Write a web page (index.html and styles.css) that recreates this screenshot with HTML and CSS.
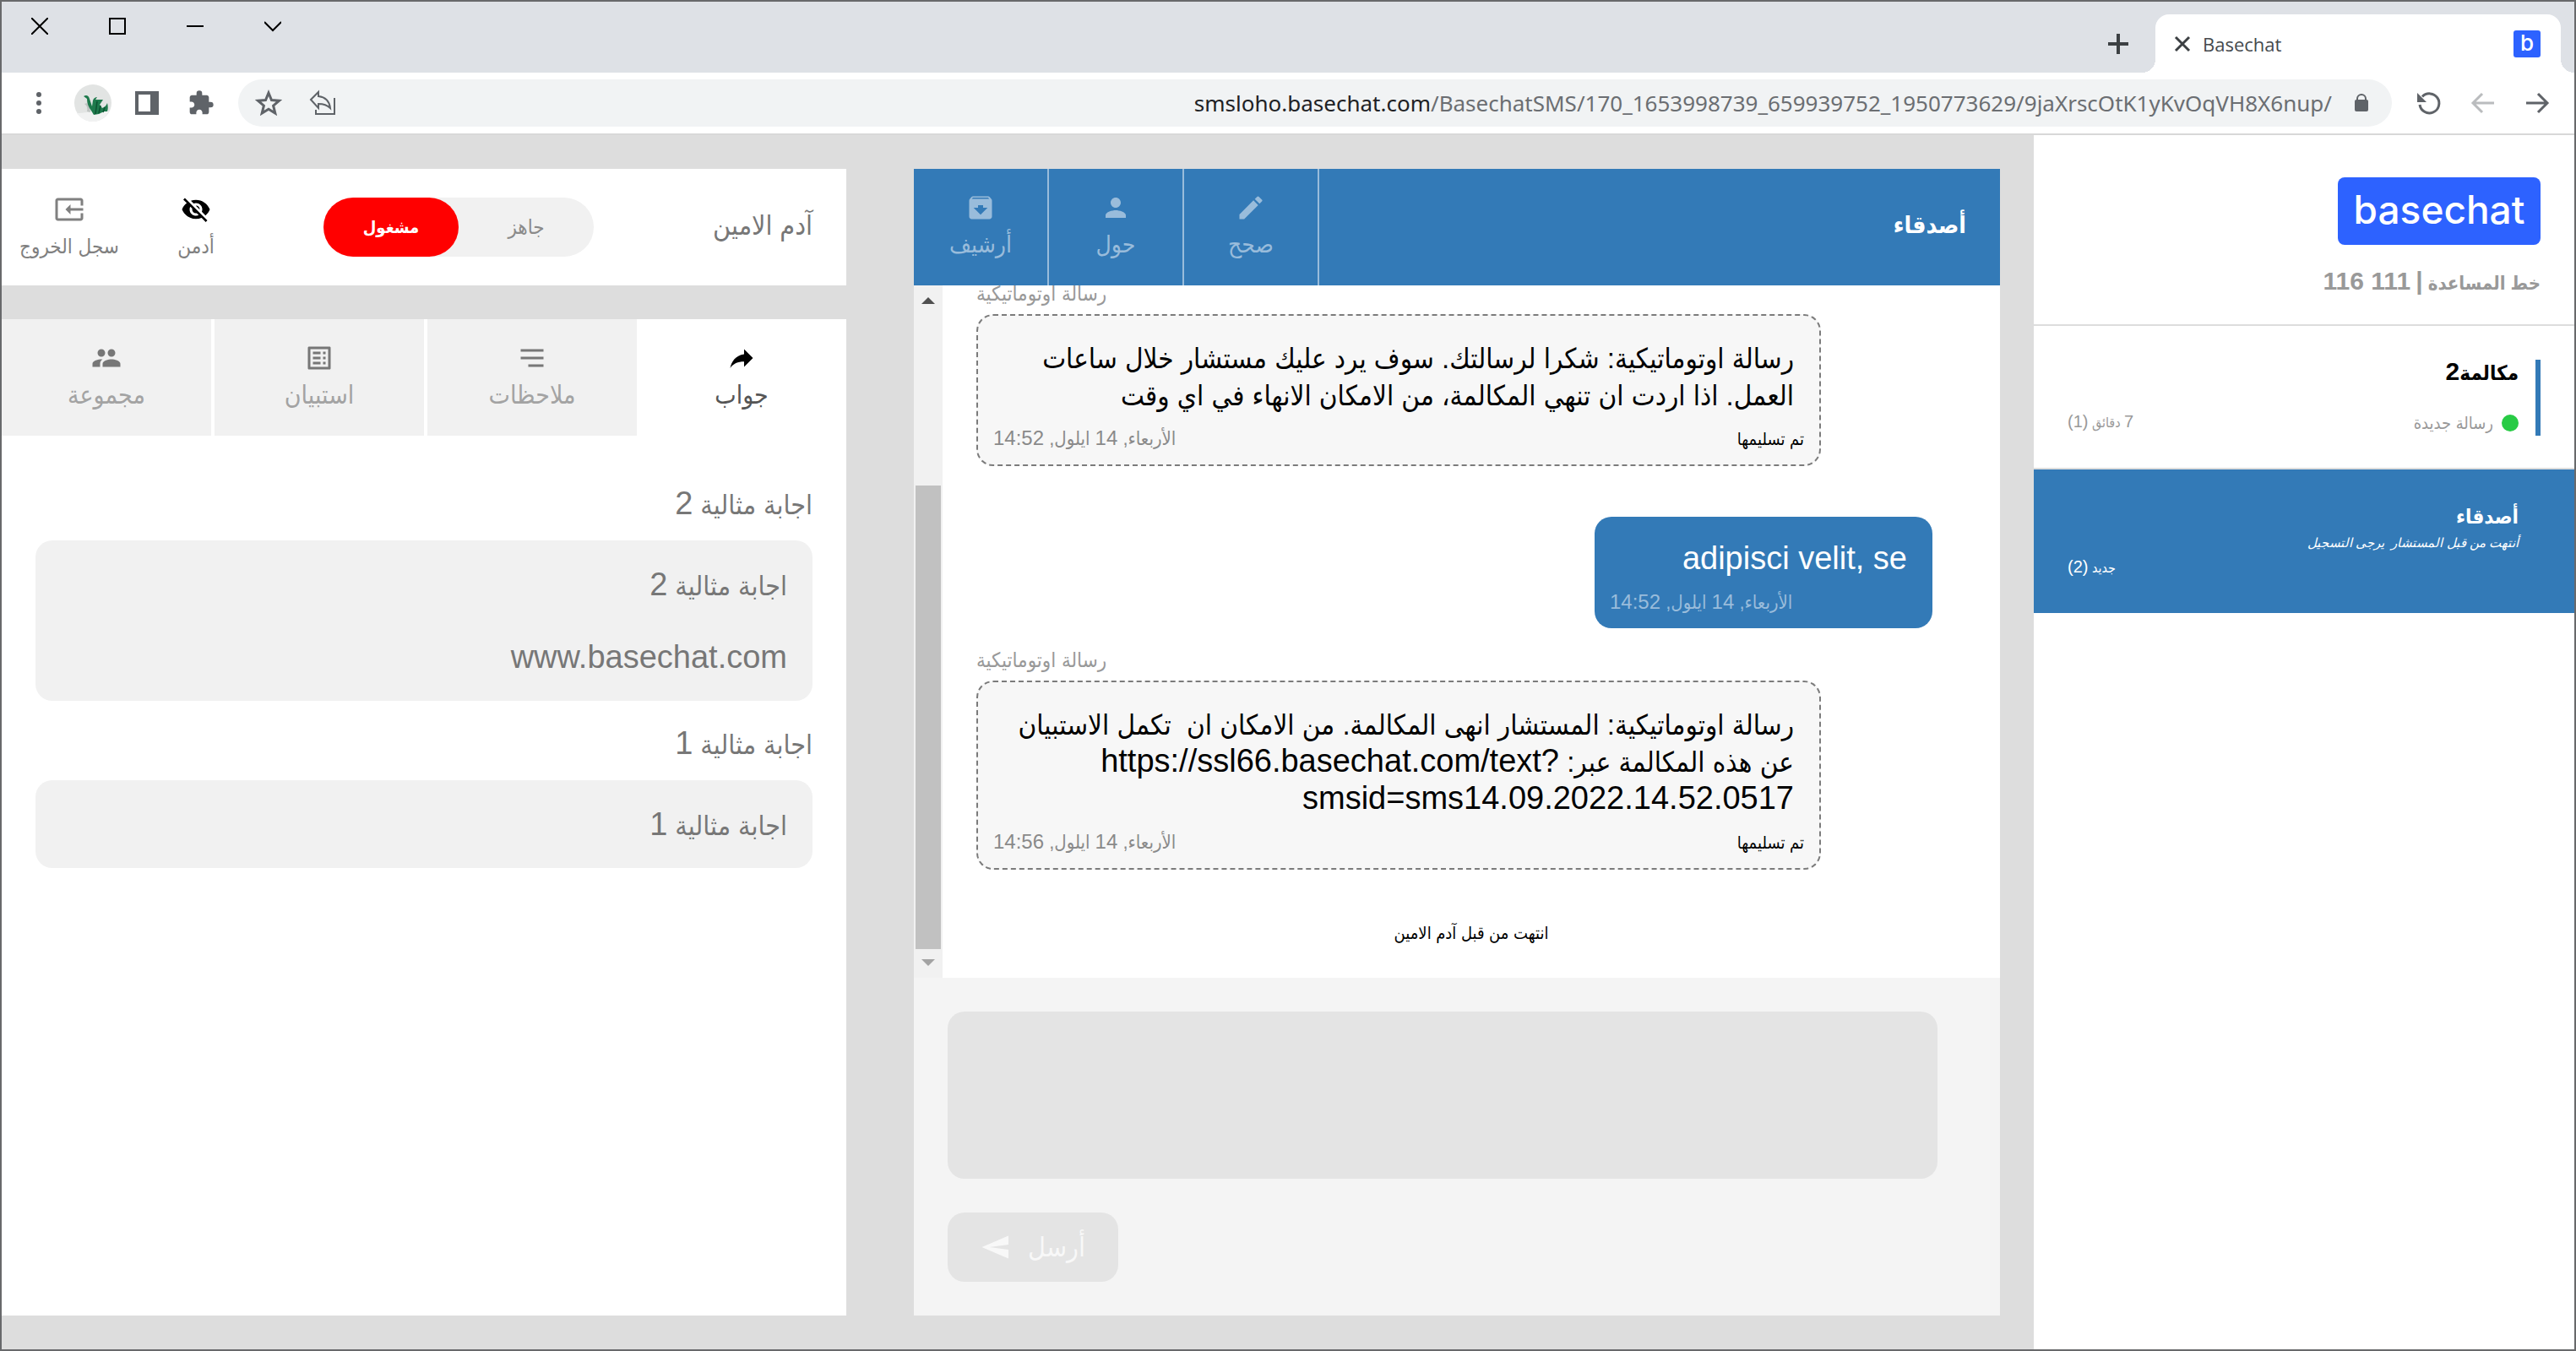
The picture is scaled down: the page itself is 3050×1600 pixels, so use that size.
FILE: index.html
```
<!DOCTYPE html>
<html lang="ar" dir="rtl">
<head>
    <meta charset="UTF-8">
    <meta name="viewport" content="width=device-width, initial-scale=1.0">
    <title>Basechat</title>
    <link rel="stylesheet" href="styles.css">
</head>
<body>
    <div class="window">
        <!-- Browser -->
        <header class="tab-strip">
            <div class="tab">
                <span class="favicon">b</span>
                <span class="tab-title">Basechat</span>
                <button class="plain" aria-label="إغلاق"><svg width="20" height="20" viewBox="0 0 20 20"><path d="M2 2l16 16M18 2L2 18" fill="none" stroke="#3c4043" stroke-width="3"/></svg></button>
            </div>
            <button class="plain new-tab" aria-label="علامة تبويب جديدة"><svg width="24" height="24" viewBox="0 0 24 24"><path d="M12 0v24M0 12h24" fill="none" stroke="#3c4043" stroke-width="4"/></svg></button>
            <div class="window-buttons">
                <button class="plain" aria-label="بحث"><svg width="20" height="20" viewBox="0 0 20 20"><path d="M0 5l10 10L20 5" fill="none" stroke="#000" stroke-width="2"/></svg></button>
                <button class="plain" aria-label="تصغير"><svg width="20" height="20" viewBox="0 0 20 20"><path d="M0 10h20" fill="none" stroke="#000" stroke-width="2"/></svg></button>
                <button class="plain" aria-label="تكبير"><svg width="20" height="20" viewBox="0 0 20 20"><path d="M1 1h18v18H1z" fill="none" stroke="#000" stroke-width="2"/></svg></button>
                <button class="plain" aria-label="إغلاق النافذة"><svg width="20" height="20" viewBox="0 0 20 20"><path d="M0 0l20 20M20 0L0 20" fill="none" stroke="#000" stroke-width="2"/></svg></button>
            </div>
        </header>
        <div class="toolbar">
            <div class="tools">
                <button class="plain" aria-label="رجوع"><svg width="32" height="32" viewBox="0 0 32 32"><path d="M3 16h24M17 5l11 11-11 11" fill="none" stroke="#5f6368" stroke-width="3"/></svg></button>
                <button class="plain" aria-label="تقدم"><svg width="32" height="32" viewBox="0 0 32 32"><path d="M29 16H5M15 5L4 16l11 11" fill="none" stroke="#babcbe" stroke-width="3"/></svg></button>
                <button class="plain" aria-label="تحديث"><svg width="32" height="32" viewBox="0 0 32 32"><path d="M5 18a11.500 11.500 0 1 0 3-9.500" fill="none" stroke="#5f6368" stroke-width="3"/><path d="M2 4v11h11z" fill="#5f6368"/></svg></button>
            </div>
            <div class="omnibox">
                <svg width="24" height="24" viewBox="0 0 24 24"><path d="M7 9V7a5 5 0 0 1 10 0v2" fill="none" stroke="#5f6368" stroke-width="2"/><rect x="4" y="8" width="16" height="14" rx="2" fill="#5f6368"/></svg>
                <p class="url" dir="ltr"><span>smsloho.basechat.com</span>/BasechatSMS/170_1653998739_659939752_1950773629/9jaXrscOtK1yKvOqVH8X6nup/</p>
                <button class="plain share" aria-label="مشاركة"><svg width="32" height="32" viewBox="0 0 32 32"><path d="M2 12L11 3v5c9 1 13 6 14 14-4-4-8-5-14-5v5z" fill="none" stroke="#5f6368" stroke-width="2"/><path d="M8 24v5h22V10" fill="none" stroke="#5f6368" stroke-width="2"/></svg></button>
                <button class="plain" aria-label="إشارة مرجعية"><svg width="32" height="32" viewBox="0 0 32 32"><path d="M16 4l3.500 8.500 9 .7-6.900 6 2.200 8.800-7.800-4.800-7.800 4.800 2.200-8.800-6.900-6 9-.7z" fill="none" stroke="#5f6368" stroke-width="3"/></svg></button>
            </div>
            <div class="tools">
                <button class="plain" aria-label="الإضافات"><svg width="32" height="32" viewBox="0 0 24 24"><path d="M20.500 11H19V7c0-1.100-.9-2-2-2h-4V3.500a2.500 2.500 0 0 0-5 0V5H4c-1.100 0-1.990.9-1.990 2v3.800H3.500c1.490 0 2.700 1.210 2.700 2.700s-1.210 2.700-2.700 2.700H2V20c0 1.100.9 2 2 2h3.800v-1.500c0-1.490 1.210-2.700 2.700-2.700s2.700 1.210 2.700 2.700V22H17c1.100 0 2-.9 2-2v-4h1.500a2.500 2.500 0 0 0 0-5z" fill="#5f6368"/></svg></button>
                <button class="plain" aria-label="اللوحة الجانبية"><svg width="32" height="32" viewBox="0 0 32 32"><path d="M2 2h28v28H2zM6 6v20h14V6z" fill="#5f6368" fill-rule="evenodd"/></svg></button>
                <button class="plain avatar" aria-label="الملف الشخصي"><svg width="44" height="44" viewBox="0 0 44 44"><circle cx="22" cy="22" r="22" fill="#e2e4e3"/><path d="M3 34c10 0 24-4 38-2a22 22 0 0 1-38 2z" fill="#f1f2f2"/><path d="M12 23c4-2 6 0 6 4l1 6-4-1c1-4 0-7-3-9z" fill="#bfc4c2"/><path d="M11 14c3-2 6-1 7 3l3 9 1-7c1-3 3-4 5-4l-2 3 9 0-4 6 3 4c3-1 5-3 6-6 1 4 1 7 0 10l-4 0-6 3-6 1-3-5c-3-4-5-8-5-14z" fill="#1e7a4c"/><path d="M27 20l-2 15M31 25l-2 9M36 27l-2 6" stroke="#0d5232" stroke-width="1.500" fill="none"/></svg></button>
                <button class="plain" aria-label="القائمة"><svg width="32" height="32" viewBox="0 0 32 32"><g fill="#5f6368"><circle cx="16" cy="6" r="3"/><circle cx="16" cy="16" r="3"/><circle cx="16" cy="26" r="3"/></g></svg></button>
            </div>
        </div>

        <main class="page">
            <!-- Conversations -->
            <aside class="sidebar">
                <div class="brand">
                    <div class="logo" dir="ltr">basechat</div>
                    <p class="helpline">خط المساعدة <span>|</span> <span dir="ltr">116 111</span></p>
                </div>
                <a class="conversation" href="#">
                    <div class="conversation-body unread">
                        <h2>مكالمة<span>2</span></h2>
                        <div class="status">
                            <span class="dot"></span>
                            <span class="status-text">رسالة جديدة</span>
                            <span class="count"><span>7</span> دقائق <span>(1)</span></span>
                        </div>
                    </div>
                </a>
                <a class="conversation active" href="#">
                    <div class="conversation-body">
                        <h2>أصدقاء</h2>
                        <p class="note">أنتهت من قبل المستشار&nbsp; يرجى التسجيل</p>
                        <span class="count">جديد <span>(2)</span></span>
                    </div>
                </a>
            </aside>

            <!-- Chat -->
            <section class="chat">
                <div class="chat-header">
                    <h1>أصدقاء</h1>
                    <button><svg class="icon" viewBox="0 0 24 24"><path d="M3 17.250V21h3.750L17.810 9.940l-3.750-3.750L3 17.250zM20.710 7.040a.996.996 0 0 0 0-1.410l-2.340-2.340a.996.996 0 0 0-1.410 0l-1.830 1.830 3.750 3.750 1.830-1.830z"/></svg>صحح</button>
                    <button><svg class="icon" viewBox="0 0 24 24"><path d="M12 12c2.210 0 4-1.790 4-4s-1.790-4-4-4-4 1.790-4 4 1.790 4 4 4zm0 2c-2.670 0-8 1.340-8 4v2h16v-2c0-2.660-5.330-4-8-4z"/></svg>حول</button>
                    <button><svg class="icon" viewBox="0 0 24 24"><path d="M20.540 5.230l-1.390-1.680C18.880 3.210 18.470 3 18 3H6c-.47 0-.88.21-1.160.55L3.460 5.230C3.170 5.570 3 6.020 3 6.500V19c0 1.100.9 2 2 2h14c1.100 0 2-.9 2-2V6.500c0-.48-.17-.93-.46-1.270zM12 17.500L6.500 12H10v-2h4v2h3.500L12 17.500zM5.120 5l.81-1h12l.94 1H5.120z"/></svg>أرشيف</button>
                </div>
                <div class="chat-body">
                    <div class="messages">
                        <p class="label">رسالة اوتوماتيكية</p>
                        <div class="bubble auto">
                            <p>رسالة اوتوماتيكية: شكرا لرسالتك. سوف يرد عليك مستشار خلال ساعات<br>العمل. اذا اردت ان تنهي المكالمة، من الامكان الانهاء في اي وقت</p>
                            <div class="meta"><span class="delivered">تم تسليمها</span><time>الأربعاء, <span>14</span> ايلول, <span>14:52</span></time></div>
                        </div>
                        <div class="bubble own">
                            <p><span dir="ltr">adipisci velit, se</span></p>
                            <div class="meta"><time>الأربعاء, <span>14</span> ايلول, <span>14:52</span></time></div>
                        </div>
                        <p class="label">رسالة اوتوماتيكية</p>
                        <div class="bubble auto">
                            <p>رسالة اوتوماتيكية: المستشار انهى المكالمة. من الامكان ان&nbsp; تكمل الاستبيان<br>عن هذه المكالمة عبر: <span dir="ltr">https://ssl66.basechat.com/text?</span><br><span dir="ltr">smsid=sms14.09.2022.14.52.0517</span></p>
                            <div class="meta"><span class="delivered">تم تسليمها</span><time>الأربعاء, <span>14</span> ايلول, <span>14:56</span></time></div>
                        </div>
                        <p class="ended">انتهت من قبل آدم الامين</p>
                    </div>
                    <div class="scrollbar">
                        <svg width="34" height="34" viewBox="0 0 34 34"><path d="M9 22l8-8 8 8z" fill="#505050"/></svg>
                        <div class="track"><div class="thumb"></div></div>
                        <svg width="34" height="34" viewBox="0 0 34 34"><path d="M9 12l8 8 8-8z" fill="#a3a3a3"/></svg>
                    </div>
                </div>
                <form class="compose">
                    <textarea aria-label="رسالة" disabled></textarea>
                    <button type="button" disabled>أرسل<svg class="icon flip" viewBox="0 0 24 24"><path d="M2.010 21L23 12 2.010 3 2 10l15 2-15 2z"/></svg></button>
                </form>
            </section>

            <!-- Counsellor panel -->
            <section class="panel">
                <div class="user-bar">
                    <h3>آدم الامين</h3>
                    <div class="switch">
                        <button>جاهز</button>
                        <button class="busy">مشغول</button>
                    </div>
                    <div class="user-links">
                        <button><svg class="icon dark" viewBox="0 0 24 24"><path d="M12 7c2.760 0 5 2.240 5 5 0 .65-.13 1.260-.36 1.830l2.920 2.920c1.510-1.260 2.700-2.890 3.430-4.750-1.730-4.390-6-7.500-11-7.500-1.400 0-2.740.25-3.980.7l2.160 2.160C10.740 7.130 11.350 7 12 7zM2 4.270l2.280 2.280.46.46C3.080 8.300 1.780 10.020 1 12c1.730 4.390 6 7.500 11 7.500 1.550 0 3.030-.3 4.380-.84l.42.42L19.730 22 21 20.730 3.270 3 2 4.270zM7.530 9.800l1.550 1.550c-.05.21-.08.43-.08.65 0 1.660 1.340 3 3 3 .22 0 .44-.03.65-.08l1.550 1.550c-.67.33-1.410.53-2.200.53-2.760 0-5-2.240-5-5 0-.79.2-1.530.53-2.200zm4.310-.78l3.150 3.150.02-.16c0-1.660-1.340-3-3-3l-.17.01z"/></svg>أدمن</button>
                        <button><svg class="icon flip" viewBox="0 0 24 24"><path d="M21 3.010H3c-1.100 0-2 .9-2 2V9h2V4.990h18v14.030H3V15H1v4.010c0 1.100.9 1.980 2 1.980h18c1.100 0 2-.88 2-1.980v-14c0-1.110-.9-2-2-2zM11 16l4-4-4-4v3H1v2h10v3z"/></svg>سجل الخروج</button>
                    </div>
                </div>
                <div class="panel-body">
                    <nav class="tabs">
                        <button class="selected"><svg class="icon" viewBox="0 0 24 24"><path d="M14 5l7 7-7 7v-4.100c-5 0-8.500 1.600-11 5.100 1-5 4-10 11-11z"/></svg>جواب</button>
                        <button><svg class="icon" viewBox="0 0 24 24"><path d="M3 5h18v2H3zM3 11h18v2H3zM9 17h12v2H9z"/></svg>ملاحظات</button>
                        <button><svg class="icon flip" viewBox="0 0 24 24"><path d="M11 7h6v2h-6zm0 4h6v2h-6zm0 4h6v2h-6zM7 7h2v2H7zm0 4h2v2H7zm0 4h2v2H7zM20.100 3H3.900c-.5 0-.9.400-.9.900v16.200c0 .4.400.9.900.9h16.200c.4 0 .9-.5.900-.9V3.900c0-.5-.5-.9-.9-.9zM19 19H5V5h14v14z"/></svg>استبيان</button>
                        <button><svg class="icon flip" viewBox="0 0 24 24"><path d="M16 11c1.660 0 2.990-1.340 2.990-3S17.660 5 16 5c-1.660 0-3 1.340-3 3s1.340 3 3 3zm-8 0c1.660 0 2.990-1.340 2.990-3S9.660 5 8 5C6.340 5 5 6.340 5 8s1.340 3 3 3zm0 2c-2.330 0-7 1.170-7 3.500V19h14v-2.500c0-2.330-4.670-3.500-7-3.500zm8 0c-.29 0-.62.02-.97.05 1.160.84 1.970 1.970 1.970 3.450V19h6v-2.500c0-2.330-4.670-3.500-7-3.500z"/></svg>مجموعة</button>
                    </nav>
                    <div class="answers">
                        <h4>اجابة مثالية <span>2</span></h4>
                        <div class="answer">
                            <p>اجابة مثالية <span>2</span></p>
                            <p><span>www.basechat.com</span></p>
                        </div>
                        <h4>اجابة مثالية <span>1</span></h4>
                        <div class="answer">
                            <p>اجابة مثالية <span>1</span></p>
                        </div>
                    </div>
                </div>
            </section>
        </main>
    </div>
</body>
</html>
```
FILE: styles.css
```
:root {
    --blue: #337ab7;
    --brand: #2d62ff;
    --page: #ddd;
    --light: #f1f1f1;
    --grey: #777;
    --pale: #a3a3a3;
    --frame: #68696b;
}

* {
    box-sizing: border-box;
}

body {
    margin: 0;
    font-family: "Liberation Sans", "DejaVu Sans Condensed", sans-serif;
    font-size: 24px;
    color: #000;
}

h1, h2, h3, h4, p {
    margin: 0;
    font-weight: normal;
}

button {
    border: none;
    padding: 0;
    background: none;
    font-family: inherit;
    cursor: pointer;
}

svg {
    display: block;
    flex: none;
}

.plain {
    display: block;
}

.icon {
    width: 36px;
    height: 36px;
    fill: currentColor;
}

.flip {
    transform: scaleX(-1);
}

.window {
    min-height: 100vh;
    display: flex;
    flex-direction: column;
    border: 2px solid var(--frame);
    background: #fff;
}

/* Browser */
.tab-strip {
    height: 84px;
    padding-right: 16px;
    display: flex;
    background: #dee1e6;
}

.tab {
    position: relative;
    width: 480px;
    margin-top: 15px;
    padding: 0 24px 0 22px;
    display: flex;
    align-items: center;
    background: #fff;
    border-radius: 16px 16px 0 0;
}

.tab::before,
.tab::after {
    content: "";
    position: absolute;
    bottom: 0;
    width: 16px;
    height: 16px;
}

.tab::before {
    right: -16px;
    background: radial-gradient(circle at 100% 0, #dee1e6 16px, #fff 16px);
}

.tab::after {
    left: -16px;
    background: radial-gradient(circle at 0 0, #dee1e6 16px, #fff 16px);
}

.favicon {
    width: 32px;
    height: 32px;
    border-radius: 3px;
    background: var(--brand);
    color: #fff;
    font: 500 26px/30px Inter, sans-serif;
    text-align: center;
}

.tab-title {
    margin-right: auto;
    margin-left: 14px;
    font-family: "Open Sans", sans-serif;
    font-size: 22px;
    color: #45494d;
}

.new-tab {
    margin-right: 32px;
    padding-top: 16px;
}

.window-buttons {
    margin-right: auto;
    padding: 19px 0 0 35px;
    display: flex;
    align-items: flex-start;
    gap: 72px;
}

.toolbar {
    height: 72px;
    padding: 0 28px;
    display: flex;
    align-items: center;
    gap: 28px;
}

.tools {
    display: flex;
    align-items: center;
    gap: 32px;
}

.avatar {
    margin: 0 -6px;
}

.omnibox {
    flex: 1;
    height: 56px;
    padding: 0 24px 0 20px;
    display: flex;
    align-items: center;
    border-radius: 28px;
    background: #f1f3f4;
}

.url {
    margin-right: 23px;
    font-family: "Noto Sans", sans-serif;
    font-size: 26px;
    color: #6b6e72;
    white-space: nowrap;
}

.url span {
    color: #202124;
}

.share {
    margin-right: auto;
    margin-left: 32px;
}

/* Page */
.page {
    flex: 1;
    display: grid;
    grid-template-columns: 640px minmax(0, 1286fr) minmax(0, 1040fr);
    column-gap: 40px;
    border-top: 2px solid #d8d8d8;
    background: var(--page);
}

/* larger Latin runs must not push the Arabic lines apart */
.helpline span,
.conversation span span,
.conversation h2 span,
.bubble p span,
.meta time span,
.answers span {
    line-height: 0;
}

.sidebar {
    background: #fff;
}

.brand {
    padding: 50px 40px 28px;
    border-bottom: 2px solid var(--page);
}

.logo {
    width: 240px;
    height: 80px;
    border-radius: 8px;
    background: var(--brand);
    color: #fff;
    font: 500 46px/76px Inter, sans-serif;
    text-align: center;
}

.helpline {
    margin-top: 26px;
    font-size: 22px;
    line-height: 40px;
    font-weight: bold;
    color: #999;
}

.helpline span {
    font-size: 30px;
}

.conversation {
    display: block;
    min-height: 170px;
    padding: 40px 40px 38px;
    border-bottom: 2px solid var(--page);
    color: inherit;
    text-decoration: none;
}

.conversation-body {
    display: flex;
    flex-direction: column;
    padding-right: 26px;
}

.unread {
    height: 90px;
    justify-content: space-between;
    padding-right: 20px;
    border-right: 6px solid var(--blue);
}

.conversation h2 {
    font-size: 24px;
    line-height: 32px;
    font-weight: bold;
}

.conversation h2 span {
    font-size: 30px;
}

.status {
    display: flex;
    align-items: center;
    line-height: 30px;
    color: #999;
}

.dot {
    width: 20px;
    height: 20px;
    margin-left: 10px;
    border-radius: 50%;
    background: #28cb45;
}

.status-text {
    font-size: 20px;
}

.count {
    margin-right: auto;
    font-size: 16px;
    line-height: 30px;
}

.count span {
    font-size: 20px;
}

.active {
    border-bottom: none;
    background: var(--blue);
    color: #fff;
}

.note {
    font-size: 15px;
    line-height: 30px;
    font-style: italic;
}

/* Chat */
.chat {
    margin: 40px 0;
    display: flex;
    flex-direction: column;
    background: #fff;
}

.chat-header {
    display: flex;
    height: 138px;
    background: var(--blue);
    color: #fff;
}

.chat-header h1 {
    flex: 1;
    padding-right: 40px;
    font-size: 28px;
    line-height: 134px;
    font-weight: bold;
}

.chat-header button,
.user-links button,
.tabs button {
    display: flex;
    flex-direction: column;
    align-items: center;
    padding-top: 28px;
    line-height: 52px;
}

.chat-header button {
    width: 160px;
    border-right: 2px solid #99bcdb;
    font-size: 28px;
    color: #99bcdb;
}

.chat-body {
    flex: 1 0 820px;
    height: 820px;
    display: flex;
}

.messages {
    flex: 1;
    min-height: 0;
    padding: 0 80px 38px 40px;
    display: flex;
    flex-direction: column;
    justify-content: flex-end;
    overflow: hidden;
}

.label {
    flex: none;
    align-self: flex-end;
    margin-bottom: 6px;
    line-height: 36px;
    color: #999;
}

.bubble {
    flex: none;
    border-radius: 20px;
    font-size: 33px;
}

.bubble p {
    padding: 29px 30px 0;
    line-height: 44px;
    white-space: nowrap;
}

.bubble p span {
    font-size: 38px;
}

.auto {
    align-self: flex-end;
    width: 1000px;
    max-width: 100%;
    margin-bottom: 60px;
    border: 2px dashed #7b7b7b;
    background: #f7f7f7;
}

.own {
    align-self: flex-start;
    width: 400px;
    margin-bottom: 20px;
    background: var(--blue);
    color: #fff;
}

.meta {
    display: flex;
    padding: 14px 18px 15px;
    font-size: 22px;
    line-height: 30px;
}

.meta time {
    margin-right: auto;
    color: #8a8a8a;
}

.meta time span {
    font-size: 24px;
}

.own .meta time {
    color: #99bcdb;
}

.delivered {
    font-size: 20px;
}

.ended {
    flex: none;
    margin-right: -40px;
    font-size: 20px;
    line-height: 30px;
    text-align: center;
}

.scrollbar {
    width: 34px;
    display: flex;
    flex-direction: column;
    background: var(--light);
}

.track {
    flex: 1;
    padding: 0 2px;
    display: flex;
    flex-direction: column;
    justify-content: flex-end;
}

.thumb {
    height: 73%;
    background: #c1c1c1;
}

.compose {
    padding: 40px;
    display: flex;
    flex-direction: column;
    align-items: flex-end;
    gap: 40px;
    background: #f4f4f4;
}

.compose textarea {
    width: calc(100% - 34px);
    height: 198px;
    border: none;
    border-radius: 20px;
    background: #e4e4e4;
    resize: none;
}

.compose button {
    width: 202px;
    height: 82px;
    display: flex;
    align-items: center;
    justify-content: center;
    gap: 20px;
    border-radius: 20px;
    background: #e4e4e4;
    color: #f8f8f8;
    font-size: 32px;
}

/* Counsellor panel */
.panel {
    margin: 40px 40px 40px 0;
    display: flex;
    flex-direction: column;
    gap: 40px;
}

.user-bar {
    height: 138px;
    padding-right: 40px;
    display: flex;
    background: #fff;
    color: var(--grey);
}

.user-bar h3 {
    flex: 1;
    font-size: 32px;
    line-height: 134px;
}

.switch {
    align-self: center;
    width: 320px;
    height: 70px;
    margin-left: 76px;
    display: flex;
    border-radius: 35px;
    background: var(--light);
}

.switch button {
    flex: 1;
    border-radius: 35px;
    font-size: 24px;
    color: #8a8a8a;
}

.switch .busy {
    background: #f00;
    color: #fff;
    font-size: 20px;
    font-weight: bold;
}

.user-links {
    display: flex;
    width: 305px;
}

.user-links button {
    width: 150px;
    padding-top: 30px;
    font-size: 24px;
    color: #808080;
}

.user-links .dark {
    color: #000;
}

.panel-body {
    flex: 1;
    background: #fff;
}

.tabs {
    display: flex;
}

.tabs button {
    flex: 1;
    height: 138px;
    border-left: 4px solid #fff;
    background: var(--light);
    color: var(--pale);
    font-size: 30px;
}

.tabs button:first-child,
.tabs button:last-child {
    border-left: none;
}

.tabs .icon {
    color: var(--grey);
}

.tabs .selected {
    background: #fff;
    color: #555;
}

.tabs .selected .icon {
    color: #000;
}

.answers {
    padding: 60px 40px 40px;
    font-size: 32px;
    line-height: 44px;
    color: var(--grey);
}

.answers h4 {
    margin-bottom: 20px;
}

.answers span {
    font-size: 38px;
}

.answer {
    margin-bottom: 30px;
    padding: 32px 30px 28px;
    display: flex;
    flex-direction: column;
    gap: 42px;
    border-radius: 20px;
    background: var(--light);
}
```
